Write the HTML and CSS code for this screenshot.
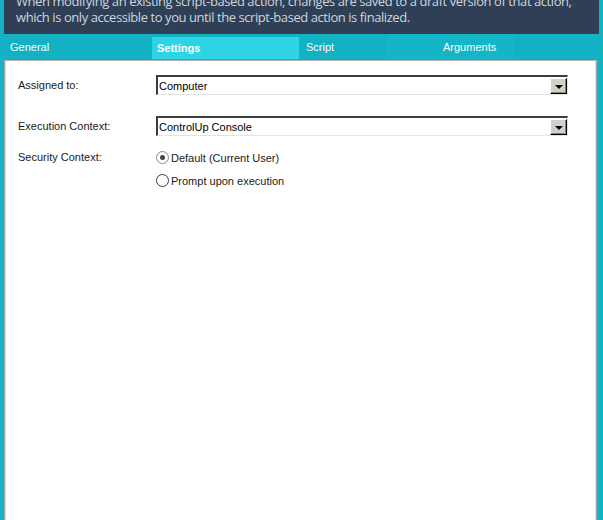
FILE: index.html
```html
<!DOCTYPE html>
<html>
<head>
<meta charset="utf-8">
<link rel="stylesheet" href="styles.css">
</head>
<body>
<div class="window">
  <div class="header">
    <p class="note">When modifying an existing script-based action, changes are saved to a draft version of that action,<br>which is only accessible to you until the script-based action is finalized.</p>
  </div>
  <div class="tabs">
    <div class="tab tab-general">General</div>
    <div class="tab tab-settings active">Settings</div>
    <div class="tab tab-script">Script</div>
    <div class="tab tab-args">Arguments</div>
  </div>
  <div class="panel">
    <div class="row row-assigned">
      <div class="label">Assigned to:</div>
      <div class="combo"><span class="combo-text">Computer</span><span class="combo-btn"><span class="arrow"></span></span></div>
    </div>
    <div class="row row-exec">
      <div class="label">Execution Context:</div>
      <div class="combo"><span class="combo-text">ControlUp Console</span><span class="combo-btn"><span class="arrow"></span></span></div>
    </div>
    <div class="row row-security">
      <div class="label sec-label">Security Context:</div>
      <div class="radios">
        <div class="radio-opt"><span class="radio checked"></span><span class="radio-text">Default (Current User)</span></div>
        <div class="radio-opt"><span class="radio"></span><span class="radio-text">Prompt upon execution</span></div>
      </div>
    </div>
  </div>
</div>
</body>
</html>
```
FILE: styles.css
```css
html, body {
  margin: 0;
  padding: 0;
  height: 100%;
}
body {
  background: #14b3c3;
  overflow: hidden;
}
.window {
  margin-left: 4px;
  width: 595px;
  height: 520px;
  display: flex;
  flex-direction: column;
}
.header {
  height: 34px;
  background: #2f4056;
  overflow: hidden;
  flex: none;
}
.note {
  margin: -7px 0 0 0;
  padding-left: 12px;
  font-family: "Open Sans", sans-serif;
  font-size: 13px;
  letter-spacing: -0.43px;
  line-height: 16px;
  color: #cdd5de;
  white-space: nowrap;
}
.tabs {
  height: 26px;
  background: #12b2c4;
  display: flex;
  flex: none;
  font-family: "Liberation Sans", Arial, sans-serif;
  font-size: 11px;
  color: #ffffff;
}
.tab {
  display: flex;
  align-items: center;
}
.tab-general {
  width: 142px;
  padding-left: 6px;
}
.tab-settings {
  margin-top: 3px;
  height: 22px;
  width: 142px;
  padding-left: 5px;
  background: #2cd4e5;
  font-weight: bold;
  align-self: flex-start;
}
.tab-script {
  width: 80px;
  padding-left: 7px;
}
.tab-args {
  width: 128px;
  padding-left: 57px;
  box-sizing: border-box;
  background: #14b5c7;
}
.panel {
  flex: 1;
  background: #ffffff;
  border-top: 1px solid #b4b4b4;
  border-left: 1px solid #a6a6a6;
  border-right: 1px solid #a6a6a6;
  width: 593px;
  box-shadow: inset 1px 0 0 #dcdcdc, inset -1px 0 0 #dcdcdc;
  font-family: "Liberation Sans", Arial, sans-serif;
  font-size: 11px;
  color: #1a1a1a;
  padding-top: 14px;
  box-sizing: border-box;
}
.row {
  display: flex;
  padding-left: 13px;
}
.label {
  width: 138px;
  line-height: 20px;
  flex: none;
}
.row-exec {
  margin-top: 21px;
}
.row-security {
  margin-top: 10px;
}
.sec-label {
  line-height: 23px;
}
.combo {
  width: 412px;
  height: 20px;
  box-sizing: border-box;
  border-top: 2px solid #3c3c3c;
  border-left: 2px solid #3c3c3c;
  border-bottom: 1px solid #e3e3e3;
  border-right: 1px solid #e3e3e3;
  display: flex;
  align-items: center;
  background: #fff;
}
.combo-text {
  flex: 1;
  padding-left: 1px;
  color: #000;
  font-size: 11px;
}
.combo-btn {
  width: 17px;
  height: 16px;
  box-sizing: border-box;
  background: #d4d0c8;
  border-top: 1px solid #ffffff;
  border-left: 1px solid #ffffff;
  border-right: 1px solid #000000;
  border-bottom: 1px solid #000000;
  box-shadow: inset -1px -1px 0 #808080;
  display: flex;
  align-items: center;
  justify-content: center;
  margin-top: 1px;
}
.arrow {
  width: 0;
  height: 0;
  border-left: 4px solid transparent;
  border-right: 4px solid transparent;
  border-top: 4px solid #000;
  margin-top: 2px;
}
.radios {
  display: flex;
  flex-direction: column;
}
.radio-opt {
  height: 23px;
  display: flex;
  align-items: center;
}
.radio {
  width: 13px;
  height: 13px;
  box-sizing: border-box;
  border: 1px solid #3a3a3a;
  border-radius: 50%;
  background: #fff;
  display: flex;
  align-items: center;
  justify-content: center;
  margin-right: 2px;
}
.radio.checked {
  border-color: #8a8a8a;
}
.radio.checked::after {
  content: "";
  width: 5px;
  height: 5px;
  border-radius: 50%;
  background: #444444;
}
.radio-text {
  font-size: 11px;
}
```
